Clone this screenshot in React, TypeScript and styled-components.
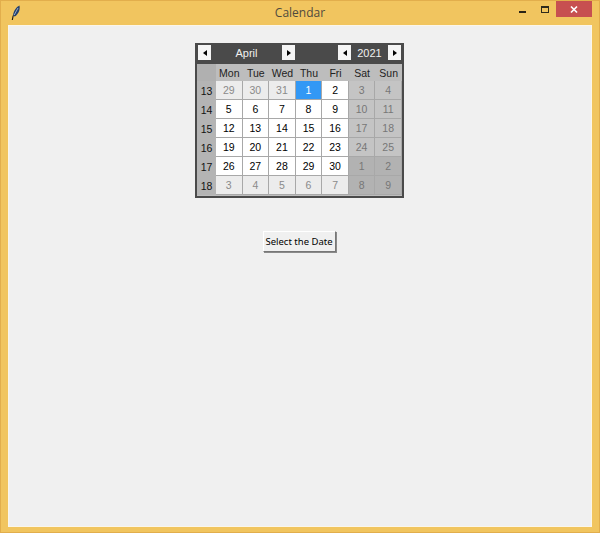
import styled, { createGlobalStyle } from 'styled-components';

const GlobalStyle = createGlobalStyle`
  html, body {
    margin: 0;
    padding: 0;
    background: #f0c45f;
  }
`;

const Window = styled.div`
  display: flex;
  flex-direction: column;
  box-sizing: border-box;
  width: 600px;
  height: 533px;
  background: #f1c55f;
  border: 1px solid #e2ae4c;
  padding: 0 7px 5px;
`;

const TitleBar = styled.header`
  display: grid;
  grid-template-columns: 1fr auto 1fr;
  align-items: start;
  height: 24px;
  flex-shrink: 0;
`;

const AppIcon = styled.svg`
  width: 16px;
  height: 16px;
  margin-top: 4px;
`;

const Title = styled.span`
  font-family: 'Open Sans', sans-serif;
  font-size: 12px;
  line-height: 24px;
  color: #4f4a3e;
`;

const Controls = styled.div`
  display: flex;
  justify-content: flex-end;
  align-items: flex-start;
`;

const MinButton = styled.span`
  width: 7px;
  height: 2px;
  margin-top: 10px;
  margin-right: 15px;
  background: #2a2416;
`;

const MaxButton = styled.span`
  box-sizing: border-box;
  width: 8px;
  height: 7px;
  margin-top: 5px;
  margin-right: 7px;
  border: 1px solid #2e2a1c;
  border-top-width: 2px;
`;

const CloseButton = styled.span`
  display: flex;
  align-items: center;
  justify-content: center;
  width: 36px;
  height: 16px;
  background: #c75050;
`;

const Content = styled.main`
  display: flex;
  flex: 1;
  flex-direction: column;
  align-items: center;
  background: #f0f0f0;
  border: 1px solid #fbf6ea;
  padding-top: 17px;
`;

const Calendar = styled.section`
  box-sizing: border-box;
  width: 209px;
  height: 155px;
  margin-right: 1px;
  background: #bdbdbd;
  border: 2px solid #4a4a4a;
  font-family: 'Liberation Sans', sans-serif;
  font-size: 10.5px;
`;

const CalHeader = styled.div`
  display: flex;
  align-items: flex-start;
  height: 19px;
  padding: 0 1px;
  background: #4a4a4a;
  color: #f0f0f0;
`;

const Arrow = styled.button<{ $right?: boolean }>`
  display: flex;
  align-items: center;
  justify-content: center;
  flex-shrink: 0;
  width: 13px;
  height: 15px;
  padding: 0;
  border: 0;
  background: #f4f4f4;

  &::before {
    content: '';
    border-style: solid;
    border-width: 3.5px 0 3.5px 0;
    border-color: transparent #000;
    border-left-width: ${(p) => (p.$right ? '4px' : '0')};
    border-right-width: ${(p) => (p.$right ? '0' : '4px')};
  }
`;

const HeaderLabel = styled.span<{ $w: number }>`
  width: ${(p) => p.$w}px;
  text-align: center;
  font-size: 11px;
  line-height: 16px;
`;

const Spacer = styled.span`
  flex: 1;
`;

const Grid = styled.div`
  display: grid;
  grid-template-columns: 19px repeat(7, 1fr);
  grid-template-rows: 17px repeat(6, 19px);
`;

const HeadCell = styled.span`
  display: flex;
  align-items: center;
  justify-content: center;
  color: #222;
`;

const CornerCell = styled(HeadCell)`
  background: #b0b0b0;
`;

const WeekCell = styled.span`
  display: flex;
  align-items: center;
  justify-content: center;
  background: #b4b4b4;
  color: #111;
`;

type DayKind = 'normal' | 'other' | 'weekend' | 'otherWeekend' | 'selected';

const dayBg: Record<DayKind, string> = {
  normal: '#ffffff',
  other: '#ececec',
  weekend: '#c4c4c4',
  otherWeekend: '#b2b2b2',
  selected: '#3298f5',
};

const dayColor: Record<DayKind, string> = {
  normal: '#000000',
  other: '#8a8a8a',
  weekend: '#777777',
  otherWeekend: '#777777',
  selected: '#ffffff',
};

const DayCell = styled.span<{ $kind: DayKind }>`
  display: flex;
  align-items: center;
  justify-content: center;
  box-sizing: border-box;
  border-right: 1px solid #a8a8a8;
  border-bottom: 1px solid #a8a8a8;
  background: ${(p) => dayBg[p.$kind]};
  color: ${(p) => dayColor[p.$kind]};
`;

const SelectButton = styled.button`
  box-sizing: border-box;
  width: 73px;
  height: 21px;
  margin-top: 33px;
  margin-right: 2px;
  padding: 0;
  background: #f0f0f0;
  border: 1px solid;
  border-color: #ffffff #777777 #777777 #ffffff;
  box-shadow: 1px 1px 0 #8a8a8a;
  font-family: 'Noto Sans', sans-serif;
  font-size: 9.5px;
  color: #000;
`;

const weekdays = ['Mon', 'Tue', 'Wed', 'Thu', 'Fri', 'Sat', 'Sun'];

const weeks: { no: number; days: number[] }[] = [
  { no: 13, days: [29, 30, 31, 1, 2, 3, 4] },
  { no: 14, days: [5, 6, 7, 8, 9, 10, 11] },
  { no: 15, days: [12, 13, 14, 15, 16, 17, 18] },
  { no: 16, days: [19, 20, 21, 22, 23, 24, 25] },
  { no: 17, days: [26, 27, 28, 29, 30, 1, 2] },
  { no: 18, days: [3, 4, 5, 6, 7, 8, 9] },
];

const kindOf = (row: number, col: number, day: number): DayKind => {
  const outside = (row === 0 && day > 20) || (row >= 4 && day < 20);
  if (row === 0 && day === 1) return 'selected';
  if (col >= 5) return outside ? 'otherWeekend' : 'weekend';
  return outside ? 'other' : 'normal';
};

const App = () => (
  <>
    <GlobalStyle />
    <Window>
      <TitleBar>
        <AppIcon viewBox="0 0 16 16">
          <path d="M11.5 0.5 C8 2 5.5 6 5 10.5 L6.8 11.5 C10 9.5 12.5 5 11.5 0.5 Z" fill="#22406f" />
          <path d="M5.2 10.5 L4.3 15" stroke="#111" strokeWidth="1.1" />
          <path d="M10 3 L6.2 10" stroke="#cfd9e6" strokeWidth="0.7" />
        </AppIcon>
        <Title>Calendar</Title>
        <Controls>
          <MinButton />
          <MaxButton />
          <CloseButton>
            <svg width="10" height="9" viewBox="0 0 10 9">
              <path d="M2 1.5 L8 7.5 M8 1.5 L2 7.5" stroke="#fff" strokeWidth="1.7" />
            </svg>
          </CloseButton>
        </Controls>
      </TitleBar>
      <Content>
        <Calendar>
          <CalHeader>
            <Arrow />
            <HeaderLabel $w={71}>April</HeaderLabel>
            <Arrow $right />
            <Spacer />
            <Arrow />
            <HeaderLabel $w={37}>2021</HeaderLabel>
            <Arrow $right />
          </CalHeader>
          <Grid>
            <CornerCell />
            {weekdays.map((d) => (
              <HeadCell key={d}>{d}</HeadCell>
            ))}
            {weeks.map((w, row) => (
              <>
                <WeekCell key={w.no}>{w.no}</WeekCell>
                {w.days.map((day, col) => (
                  <DayCell key={`${row}-${col}`} $kind={kindOf(row, col, day)}>
                    {day}
                  </DayCell>
                ))}
              </>
            ))}
          </Grid>
        </Calendar>
        <SelectButton>Select the Date</SelectButton>
      </Content>
    </Window>
  </>
);

export default App;
